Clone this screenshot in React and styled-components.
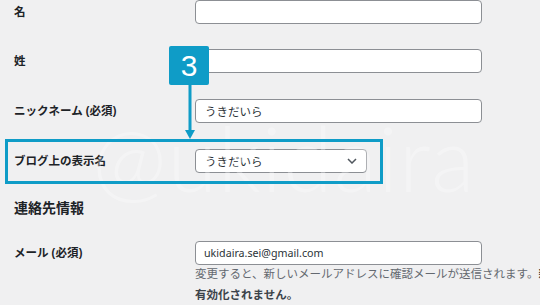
import React from "react";
import styled, { createGlobalStyle } from "styled-components";

const GlobalStyle = createGlobalStyle`
  html, body {
    margin: 0;
    padding: 0;
    background: #f0f0f1;
  }
  body {
    font-family: "Noto Sans", "Noto Sans CJK JP", sans-serif;
    color: #1d2327;
  }
`;

const Page = styled.div`
  position: relative;
  width: 540px;
  height: 305px;
  overflow: hidden;
  padding-left: 14px;
  box-sizing: border-box;
  background: #f0f0f1;
`;

const Row = styled.div`
  display: grid;
  grid-template-columns: 181px 287px;
  align-items: start;
  padding: ${(p) => (p.$first ? "0 0 12px" : p.$top ? `${p.$top}px 0 0` : "13px 0")};
`;

const Label = styled.label`
  font-size: 11.5px;
  font-weight: 700;
  line-height: 24px;
  white-space: nowrap;
`;

const Field = styled.div`
  display: flex;
  flex-direction: column;
`;

const Input = styled.div`
  box-sizing: border-box;
  width: ${(p) => p.$width || 287}px;
  height: 24px;
  border: 1px solid #8c8f94;
  border-radius: 4px;
  background: #fff;
  padding: 0 9px 0 ${(p) => (p.$latin ? 8 : 9)}px;
  display: flex;
  align-items: center;
  justify-content: space-between;
  font-size: ${(p) => (p.$latin ? "10.7px" : "11.5px")};
  color: #2c3338;
  white-space: nowrap;
`;

const Chevron = () => (
  <svg width="10" height="6" viewBox="0 0 10 6">
    <polyline points="1,1 5,5 9,1" fill="none" stroke="#50575e" strokeWidth="1.5" />
  </svg>
);

const Heading = styled.h2`
  margin: 12px 0 0;
  font-size: 14px;
  line-height: 20px;
  font-weight: 700;
`;

const Description = styled.p`
  margin: -2px 0 0;
  font-size: 11.5px;
  line-height: 21px;
  color: #646970;
  white-space: nowrap;
  strong {
    color: #3c434a;
    font-weight: 700;
  }
`;

const Watermark = styled.div`
  position: absolute;
  left: 92px;
  top: 112px;
  font-family: "Lato", "Open Sans", sans-serif;
  font-weight: 300;
  font-size: 90px;
  line-height: 1;
  letter-spacing: 1px;
  color: rgba(255, 255, 255, 0.3);
  pointer-events: none;
  white-space: nowrap;
`;

const Highlight = styled.div`
  position: absolute;
  left: 5px;
  top: 139px;
  width: 378px;
  height: 45px;
  box-sizing: border-box;
  border: 3px solid #0f9cc7;
  pointer-events: none;
`;

const Badge = styled.div`
  position: absolute;
  left: 169px;
  top: 46px;
  width: 40px;
  height: 39px;
  border-radius: 2px;
  background: #0f9cc7;
  color: #fff;
  display: flex;
  align-items: center;
  justify-content: center;
  font-family: "Liberation Sans", Arial, sans-serif;
  font-size: 30px;
`;

const Arrow = styled.svg`
  position: absolute;
  left: 183px;
  top: 85px;
`;

export default function App() {
  return (
    <>
      <GlobalStyle />
      <Page>
        <Watermark>@ukidaira</Watermark>
        <Row $first>
          <Label>名</Label>
          <Input />
        </Row>
        <Row>
          <Label>姓</Label>
          <Input />
        </Row>
        <Row>
          <Label>ニックネーム (必須)</Label>
          <Input>うきだいら</Input>
        </Row>
        <Row>
          <Label>ブログ上の表示名</Label>
          <Input $width={172}>
            うきだいら
            <Chevron />
          </Input>
        </Row>
        <Heading>連絡先情報</Heading>
        <Row $top={23}>
          <Label>メール (必須)</Label>
          <Field>
            <Input $latin>ukidaira.sei@gmail.com</Input>
            <Description>
              変更すると、新しいメールアドレスに確認メールが送信されます。
              <strong>
                新しいアドレスは確認されるまで
                <br />
                有効化されません。
              </strong>
            </Description>
          </Field>
        </Row>
        <Highlight />
        <Badge>3</Badge>
        <Arrow width="14" height="55" viewBox="0 0 14 55">
          <rect x="5.5" y="0" width="3" height="46" fill="#0f9cc7" />
          <polygon points="2,45 12,45 7,54" fill="#0f9cc7" />
        </Arrow>
      </Page>
    </>
  );
}
